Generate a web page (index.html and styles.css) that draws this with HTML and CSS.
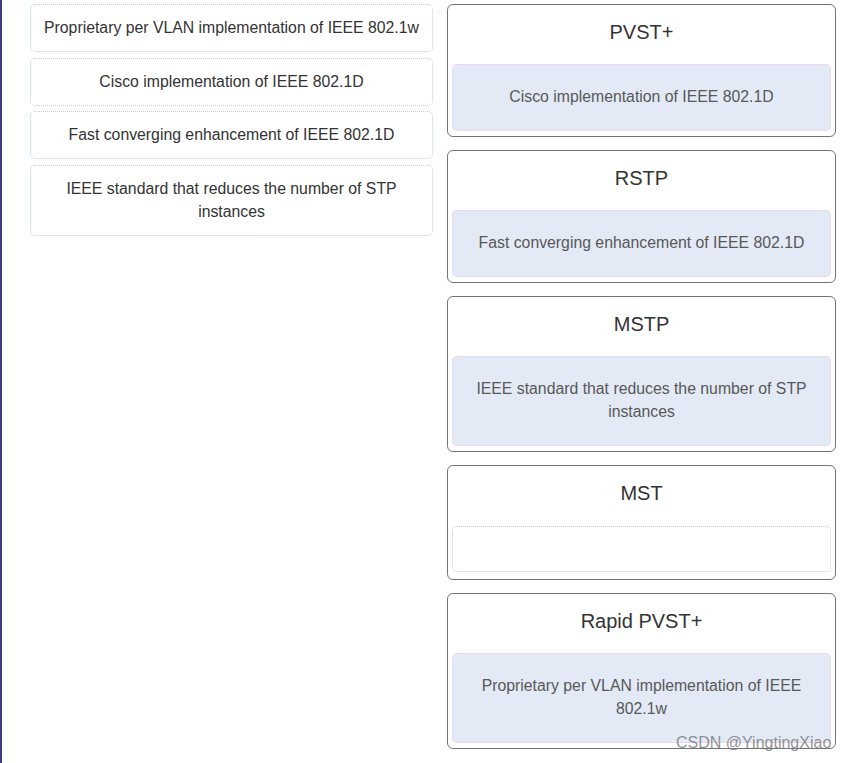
FILE: index.html
```html
<!DOCTYPE html>
<html>
<head>
<meta charset="utf-8">
<link rel="stylesheet" href="styles.css">
</head>
<body>
<div class="page">
  <div class="options">
    <div class="option">Proprietary per VLAN implementation of IEEE 802.1w</div>
    <div class="option">Cisco implementation of IEEE 802.1D</div>
    <div class="option">Fast converging enhancement of IEEE 802.1D</div>
    <div class="option">IEEE standard that reduces the number of STP instances</div>
  </div>
  <div class="targets">
    <div class="target">
      <div class="title">PVST+</div>
      <div class="zone">Cisco implementation of IEEE 802.1D</div>
    </div>
    <div class="target">
      <div class="title">RSTP</div>
      <div class="zone">Fast converging enhancement of IEEE 802.1D</div>
    </div>
    <div class="target">
      <div class="title">MSTP</div>
      <div class="zone">IEEE standard that reduces the number of STP instances</div>
    </div>
    <div class="target">
      <div class="title">MST</div>
      <div class="zone empty"></div>
    </div>
    <div class="target">
      <div class="title">Rapid PVST+</div>
      <div class="zone">Proprietary per VLAN implementation of IEEE 802.1w</div>
    </div>
  </div>
</div>
<div class="watermark">CSDN @YingtingXiao</div>
</body>
</html>
```
FILE: styles.css
```css
html, body {
  margin: 0;
  padding: 0;
  background: #ffffff;
}
body {
  font-family: "Liberation Sans", Arial, sans-serif;
  font-size: 15.8px;
  color: #333333;
  border-left: 2px solid #3a3d7a;
  min-height: 763px;
  box-sizing: border-box;
  position: relative;
}
.page {
  display: flex;
  align-items: flex-start;
  padding: 4px 0 0 28px;
  gap: 14px;
}
.options {
  width: 403px;
  display: flex;
  flex-direction: column;
  gap: 5.5px;
}
.option {
  border: 1px dotted #b9cfe6;
  border-radius: 5px;
  padding: 11px 8px 12px;
  line-height: 23px;
  text-align: center;
  color: #333333;
}
.targets {
  width: 389px;
  display: flex;
  flex-direction: column;
  gap: 13px;
}
.target {
  border: 1px solid #6f767d;
  border-radius: 6px;
  padding: 0 4px 5px;
}
.title {
  font-size: 20px;
  line-height: 24px;
  text-align: center;
  padding: 15px 0 20px;
  color: #333333;
}
.zone {
  background: #e3eaf6;
  border: 1px dotted #ecc9ee;
  border-radius: 5px;
  padding: 20px 20px 22px;
  line-height: 23px;
  text-align: center;
  color: #585858;
}
.zone.empty {
  background: #ffffff;
  border-color: #c9c3ea;
  padding: 0;
  height: 44px;
  margin: 1px 0 2px;
}
.watermark {
  position: absolute;
  left: 674px;
  top: 734px;
  font-size: 16px;
  color: rgba(110, 110, 110, 0.75);
}
```
